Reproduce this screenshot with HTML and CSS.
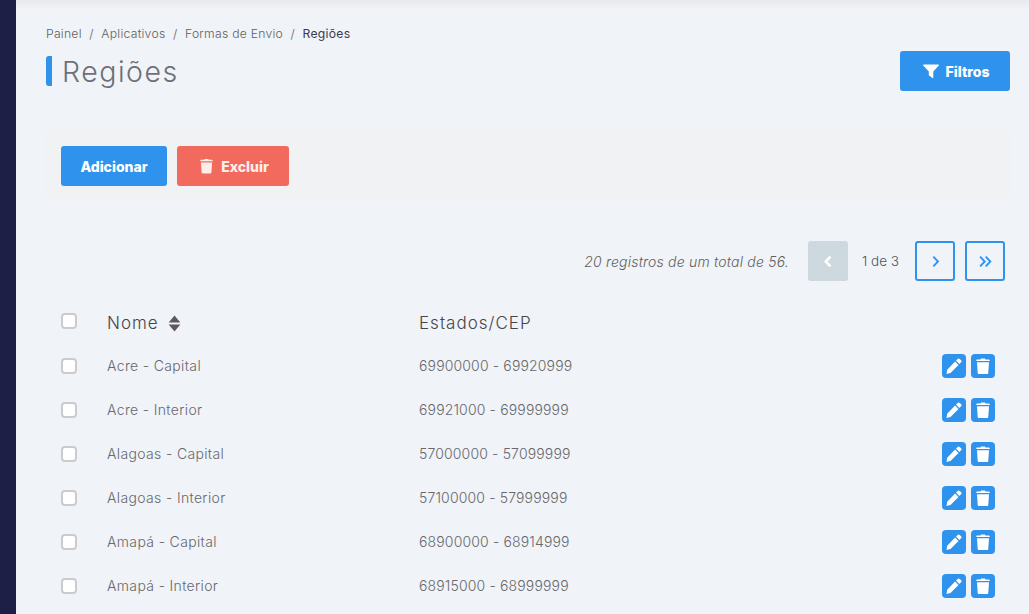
FILE: index.html
```html
<!DOCTYPE html>
<html lang="pt-BR">
<head>
<meta charset="utf-8">
<title>Regiões</title>
<link rel="stylesheet" href="styles.css">
</head>
<body>
<svg class="defs" aria-hidden="true">
  <symbol id="pencil" viewBox="0 0 16 16"><path d="M11.700.9a1.500 1.500 0 0 1 2.100 0l1.300 1.300a1.500 1.500 0 0 1 0 2.100l-1.700 1.700L10 2.600zM9.100 3.500l3.400 3.400-8 8-4 1 .7-4.200z"/></symbol>
  <symbol id="trash" viewBox="0 0 14 16"><path d="M4.600 1.400 5 .4h4l.4 1H13c.4 0 .7.3.7.7v.9H.3v-.9c0-.4.3-.7.7-.7zM1 4.200h12l-.7 10.500c0 .7-.6 1.300-1.300 1.300H3c-.7 0-1.300-.6-1.300-1.300z"/></symbol>
</svg>
<div class="app">
  <aside class="sidebar"></aside>
  <main class="main">
    <nav class="crumbs"><span>Painel</span><i>/</i><span>Aplicativos</span><i>/</i><span>Formas de Envio</span><i>/</i><b>Regiões</b></nav>
    <header class="head">
      <h1 class="title">Regiões</h1>
      <button class="btn btn-filter">
        <svg class="ico-filter" viewBox="0 0 16 16"><path d="M.7 1.500h14.600c.6 0 .9.700.5 1.100L10.300 8.400v6.200c0 .5-.5.7-.9.4l-3.300-2.400a.6.6 0 0 1-.3-.5V8.400L.2 2.600c-.4-.4-.1-1.100.5-1.100z"/></svg>Filtros
      </button>
    </header>
    <section class="toolbar">
      <button class="btn btn-add">Adicionar</button>
      <button class="btn btn-del"><svg class="ico-trash"><use href="#trash"/></svg>Excluir</button>
    </section>
    <div class="pager">
      <em class="count">20 registros de um total de 56.</em>
      <span class="pg pg-off"><svg viewBox="0 0 12 12"><path d="M7.800 1.500 3.500 6l4.300 4.500"/></svg></span>
      <span class="pg-label">1 de 3</span>
      <span class="pg"><svg viewBox="0 0 12 12"><path d="M4 1.500 8.300 6 4 10.500"/></svg></span>
      <span class="pg"><svg viewBox="0 0 12 12"><path d="M1 1.500 5.300 6 1 10.500M6.200 1.500 10.500 6l-4.300 4.500"/></svg></span>
    </div>
    <table class="grid">
      <thead>
        <tr><th class="c-check"><span class="check check-head"></span></th><th class="c-name">Nome <svg class="ico-sort" viewBox="0 0 12 16"><path d="M6 .5l5.500 6.500H.5zM6 15.500 .5 9h11z"/></svg></th><th>Estados/CEP</th><th></th></tr>
      </thead>
      <tbody>
        <tr><td class="c-check"><span class="check"></span></td><td class="c-text">Acre - Capital</td><td class="c-num">69900000 - 69920999</td><td class="c-act"><a class="act"><svg><use href="#pencil"/></svg></a><a class="act"><svg><use href="#trash"/></svg></a></td></tr>
        <tr><td class="c-check"><span class="check"></span></td><td class="c-text">Acre - Interior</td><td class="c-num">69921000 - 69999999</td><td class="c-act"><a class="act"><svg><use href="#pencil"/></svg></a><a class="act"><svg><use href="#trash"/></svg></a></td></tr>
        <tr><td class="c-check"><span class="check"></span></td><td class="c-text">Alagoas - Capital</td><td class="c-num">57000000 - 57099999</td><td class="c-act"><a class="act"><svg><use href="#pencil"/></svg></a><a class="act"><svg><use href="#trash"/></svg></a></td></tr>
        <tr><td class="c-check"><span class="check"></span></td><td class="c-text">Alagoas - Interior</td><td class="c-num">57100000 - 57999999</td><td class="c-act"><a class="act"><svg><use href="#pencil"/></svg></a><a class="act"><svg><use href="#trash"/></svg></a></td></tr>
        <tr><td class="c-check"><span class="check"></span></td><td class="c-text">Amapá - Capital</td><td class="c-num">68900000 - 68914999</td><td class="c-act"><a class="act"><svg><use href="#pencil"/></svg></a><a class="act"><svg><use href="#trash"/></svg></a></td></tr>
        <tr><td class="c-check"><span class="check"></span></td><td class="c-text">Amapá - Interior</td><td class="c-num">68915000 - 68999999</td><td class="c-act"><a class="act"><svg><use href="#pencil"/></svg></a><a class="act"><svg><use href="#trash"/></svg></a></td></tr>
      </tbody>
    </table>
  </main>
</div>
</body>
</html>
```
FILE: styles.css
```css
* { box-sizing: border-box; }
html, body { margin: 0; height: 100%; overflow: hidden; }
body { font-family: "Inter", "Liberation Sans", sans-serif; background: #f0f3f7; color: #7b7b7f; }
.defs { display: none; }
.app { display: flex; height: 614px; }
.sidebar { width: 16px; flex: none; background: #1e1f47; }
.main { flex: 1; min-width: 0; padding: 26px 19px 0 30px; background: linear-gradient(#e8e9ec 0, #f0f3f7 10px); }
.crumbs { display: flex; align-items: center; height: 15px; font-size: 12.200px; letter-spacing: .25px; font-weight: 300; color: #5f5f64; }
.crumbs i { font-style: normal; margin: 0 7.500px; }
.crumbs b { font-weight: 400; color: #3c3c4c; }
.head { display: flex; justify-content: space-between; margin-top: 10px; }
.title { margin: 5px 0 0; height: 30px; border-left: 6px solid #2f93ee; border-radius: 3px 0 0 3px; padding-left: 10px; font-size: 28.500px; line-height: 32px; letter-spacing: 1.500px; font-weight: 300; color: #6f6f77; }
.btn { display: inline-flex; align-items: center; justify-content: center; height: 40px; border: 0; border-radius: 3px; font-family: inherit; font-size: 14px; font-weight: 800; color: #fff; padding: 0; }
.btn-filter { width: 110px; background: #2f93ee; gap: 7px; padding-left: 2px; }
.ico-filter { width: 16px; height: 16px; fill: #fff; }
.toolbar { display: flex; gap: 10px; margin-top: 39px; height: 72px; padding: 16px 15px; background: #f1f2f4; border-radius: 6px; }
.btn-add { width: 106px; background: #2f93ee; }
.btn-del { width: 112px; background: #f2695d; gap: 8px; color: #fdeeea; padding-left: 3px; }
.ico-trash { width: 13px; height: 16px; fill: #fdeeea; }
.pager { display: flex; align-items: center; justify-content: flex-end; height: 40px; margin-top: 39px; padding-right: 5px; }
.count { font-size: 14px; letter-spacing: .2px; font-weight: 300; color: #5f5f64; margin-right: 19px; }
.pg { width: 40px; height: 40px; display: flex; align-items: center; justify-content: center; border: 2px solid #2f93ee; border-radius: 3px; margin-left: 10px; }
.pg svg { width: 13px; height: 13px; fill: none; stroke: #2f93ee; stroke-width: 1.700; }
.pg-off { background: #cdd8df; border-color: #cdd8df; margin-left: 0; }
.pg-off svg { stroke: #fff; stroke-width: 2.400; }
.pg-label { font-size: 13.500px; font-weight: 300; color: #55555a; margin: 0 5px 0 14px; width: 38px; white-space: nowrap; }
.grid { width: 100%; border-collapse: collapse; table-layout: fixed; margin-top: 19px; font-size: 14px; font-weight: 300; color: #68686d; }
.grid th { height: 44px; padding: 1px 0 0; text-align: left; font-size: 17px; letter-spacing: 1px; font-weight: 300; color: #47454a; }
.grid td { height: 44px; padding: 0 0 1px; }
.c-text { letter-spacing: .35px; }
.c-num { letter-spacing: .15px; }
.grid th:nth-child(3) { width: 480px; }
.c-check { width: 61px; padding-left: 15px !important; }
.grid th:nth-child(2) { width: 312px; }
.check { display: block; width: 16px; height: 16px; background: #fff; border: 2px solid #cbcbce; border-radius: 4px; }
.check-head { margin-top: -3px; }
.ico-sort { width: 13px; height: 17px; fill: #5f5860; margin: -4px 0 -4px 4px; vertical-align: 1px; }
.c-act { text-align: right; padding-right: 15px !important; white-space: nowrap; }
.act { display: inline-flex; width: 24px; height: 24px; align-items: center; justify-content: center; background: #2f93ee; border-radius: 4px; margin-left: 5px; vertical-align: middle; }
.act svg { width: 16px; height: 16px; fill: #fff; }
```
